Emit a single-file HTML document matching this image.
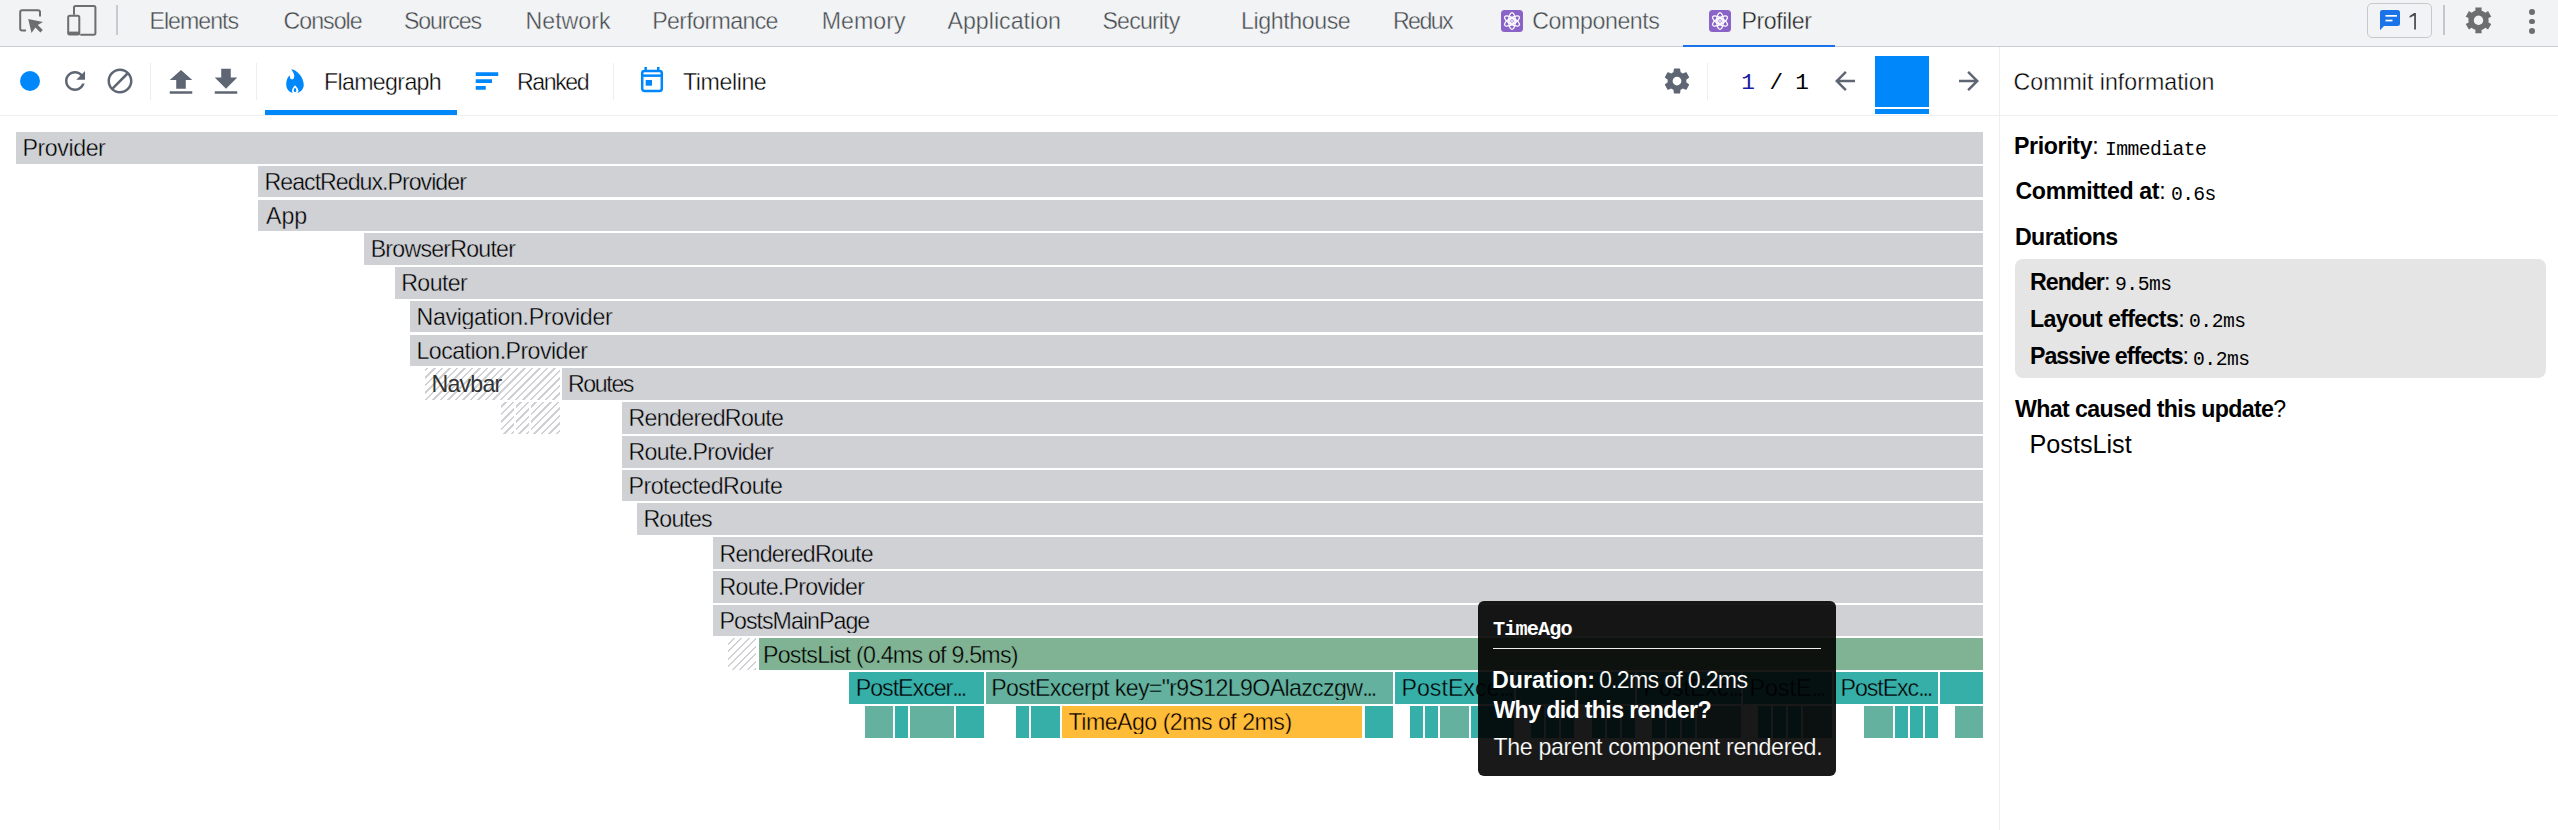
<!DOCTYPE html><html><head><meta charset="utf-8"><style>
html,body{margin:0;padding:0;font-family:"Liberation Sans",sans-serif;width:2558px;height:830px;overflow:hidden;background:#fff;}
.t{position:absolute;white-space:pre;}
.r{position:absolute;}
</style></head><body>
<div class="r" style="left:0.00px;top:0.00px;width:2558.00px;height:46.00px;background:#f1f3f4;"></div>
<div class="r" style="left:0.00px;top:46.00px;width:2558.00px;height:1.00px;background:#cacdd1;"></div>
<svg class="r" style="left:0.00px;top:0.00px;" width="60" height="46" viewBox="0 0 60 46"><path d="M26 30.4H22.2a2 2 0 0 1-2-2V12.3a2 2 0 0 1 2-2H38a2 2 0 0 1 2 2v4.3" fill="none" stroke="#6e6e6e" stroke-width="2"/>
<path d="M28.2 18.9L43 22l-5.2 3.1 5 5-2.4 2.4-5-5L31.5 32.9z" fill="#6e6e6e"/></svg>
<svg class="r" style="left:60.00px;top:0.00px;" width="50" height="46" viewBox="0 0 50 46"><path d="M14 14.8V7.4a1.5 1.5 0 0 1 1.5-1.5h18.4a1.5 1.5 0 0 1 1.5 1.5v25.8a1.5 1.5 0 0 1-1.5 1.5H20.3" fill="none" stroke="#6e6e6e" stroke-width="2"/>
<rect x="8.2" y="15.8" width="11.1" height="18.6" rx="1.5" fill="none" stroke="#6e6e6e" stroke-width="2"/>
<rect x="8.2" y="31.6" width="11.1" height="3.2" fill="#6e6e6e"/></svg>
<div class="r" style="left:116.00px;top:5.00px;width:2.00px;height:30.00px;background:#c8ccd0;"></div>
<div class="t" style="left:149.50px;top:9.66px;font-size:23.2px;line-height:23.2px;font-weight:400;color:#44484d;font-family:'Liberation Sans', sans-serif;letter-spacing:-1.000px;-webkit-text-stroke:0.4px #f1f3f4;">Elements</div>
<div class="t" style="left:283.50px;top:9.66px;font-size:23.2px;line-height:23.2px;font-weight:400;color:#44484d;font-family:'Liberation Sans', sans-serif;letter-spacing:-1.000px;-webkit-text-stroke:0.4px #f1f3f4;">Console</div>
<div class="t" style="left:404.00px;top:9.66px;font-size:23.2px;line-height:23.2px;font-weight:400;color:#44484d;font-family:'Liberation Sans', sans-serif;letter-spacing:-1.167px;-webkit-text-stroke:0.4px #f1f3f4;">Sources</div>
<div class="t" style="left:525.50px;top:9.66px;font-size:23.2px;line-height:23.2px;font-weight:400;color:#44484d;font-family:'Liberation Sans', sans-serif;-webkit-text-stroke:0.4px #f1f3f4;">Network</div>
<div class="t" style="left:652.25px;top:9.66px;font-size:23.2px;line-height:23.2px;font-weight:400;color:#44484d;font-family:'Liberation Sans', sans-serif;letter-spacing:-0.650px;-webkit-text-stroke:0.4px #f1f3f4;">Performance</div>
<div class="t" style="left:821.80px;top:9.66px;font-size:23.2px;line-height:23.2px;font-weight:400;color:#44484d;font-family:'Liberation Sans', sans-serif;-webkit-text-stroke:0.4px #f1f3f4;">Memory</div>
<div class="t" style="left:947.50px;top:9.66px;font-size:23.2px;line-height:23.2px;font-weight:400;color:#44484d;font-family:'Liberation Sans', sans-serif;-webkit-text-stroke:0.4px #f1f3f4;">Application</div>
<div class="t" style="left:1102.50px;top:9.66px;font-size:23.2px;line-height:23.2px;font-weight:400;color:#44484d;font-family:'Liberation Sans', sans-serif;letter-spacing:-0.857px;-webkit-text-stroke:0.4px #f1f3f4;">Security</div>
<div class="t" style="left:1241.00px;top:9.66px;font-size:23.2px;line-height:23.2px;font-weight:400;color:#44484d;font-family:'Liberation Sans', sans-serif;letter-spacing:-0.417px;-webkit-text-stroke:0.4px #f1f3f4;">Lighthouse</div>
<div class="t" style="left:1393.00px;top:9.66px;font-size:23.2px;line-height:23.2px;font-weight:400;color:#44484d;font-family:'Liberation Sans', sans-serif;letter-spacing:-1.625px;-webkit-text-stroke:0.4px #f1f3f4;">Redux</div>
<div class="t" style="left:1532.25px;top:9.66px;font-size:23.2px;line-height:23.2px;font-weight:400;color:#44484d;font-family:'Liberation Sans', sans-serif;letter-spacing:-0.417px;-webkit-text-stroke:0.4px #f1f3f4;">Components</div>
<div class="t" style="left:1741.50px;top:9.66px;font-size:23.2px;line-height:23.2px;font-weight:400;color:#1f1f1f;font-family:'Liberation Sans', sans-serif;letter-spacing:-0.429px;-webkit-text-stroke:0.4px #f1f3f4;">Profiler</div>
<svg class="r" style="left:1501.00px;top:10.00px;" width="22" height="22" viewBox="0 0 22 22"><rect x="0" y="0" width="22" height="22" rx="3.5" fill="#8a63c6"/>
<g fill="none" stroke="#fff" stroke-width="1.25">
<ellipse cx="11" cy="11" rx="8.4" ry="3.3" transform="rotate(30 11 11)"/>
<ellipse cx="11" cy="11" rx="8.4" ry="3.3" transform="rotate(90 11 11)"/>
<ellipse cx="11" cy="11" rx="8.4" ry="3.3" transform="rotate(150 11 11)"/>
<circle cx="11" cy="11" r="2.3"/></g><circle cx="11" cy="11" r="1.0" fill="#fff"/></svg>
<svg class="r" style="left:1709.00px;top:10.00px;" width="22" height="22" viewBox="0 0 22 22"><rect x="0" y="0" width="22" height="22" rx="3.5" fill="#8a63c6"/>
<g fill="none" stroke="#fff" stroke-width="1.25">
<ellipse cx="11" cy="11" rx="8.4" ry="3.3" transform="rotate(30 11 11)"/>
<ellipse cx="11" cy="11" rx="8.4" ry="3.3" transform="rotate(90 11 11)"/>
<ellipse cx="11" cy="11" rx="8.4" ry="3.3" transform="rotate(150 11 11)"/>
<circle cx="11" cy="11" r="2.3"/></g><circle cx="11" cy="11" r="1.0" fill="#fff"/></svg>
<div class="r" style="left:1683.00px;top:45.00px;width:152.00px;height:2.00px;background:#1a73e8;"></div>
<div class="r" style="left:2367px;top:3px;width:63px;height:33px;border:1px solid #c7c9cc;border-radius:5px;box-sizing:border-box;width:65px;height:35px;"></div>
<svg class="r" style="left:2378.00px;top:8.00px;" width="24" height="24" viewBox="0 0 24 24"><path d="M4.3 2h15.2a2.5 2.5 0 0 1 2.5 2.5v11a2.5 2.5 0 0 1-2.5 2.5H6L2 22.2V4.3A2.3 2.3 0 0 1 4.3 2z" fill="#1a73e8"/>
<rect x="7.5" y="7" width="11.5" height="1.7" fill="#fff"/><rect x="7.5" y="11.7" width="7" height="1.7" fill="#fff"/></svg>
<svg class="r" style="left:2400.00px;top:8.00px;" width="24" height="26" viewBox="0 0 24 26"><path d="M14.2,5.1 H15.9 V21.4 H14.2 V7.6 L9.6,9.7 V8.0 Z" fill="#44484d"/></svg>
<div class="r" style="left:2443.00px;top:5.00px;width:2.00px;height:30.00px;background:#c4c7cb;"></div>
<svg class="r" style="left:2465.00px;top:7.00px;" width="27" height="27" viewBox="0 0 27 27"><path d="M9.68,3.84 L10.52,3.55 L10.28,0.40 L16.72,0.40 L16.48,3.55 L19.78,5.26 L20.46,5.84 L23.07,4.06 L26.28,9.63 L23.44,11.01 L23.60,14.72 L23.44,15.59 L26.28,16.97 L23.07,22.54 L20.46,20.76 L17.32,22.76 L16.48,23.05 L16.72,26.20 L10.28,26.20 L10.52,23.05 L7.22,21.34 L6.54,20.76 L3.93,22.54 L0.72,16.97 L3.56,15.59 L3.40,11.88 L3.56,11.01 L0.72,9.63 L3.93,4.06 L6.54,5.84Z M13.5,8.6 a4.7,4.7 0 1,0 0.01,0 Z" fill="#6e6e6e" fill-rule="evenodd"/></svg>
<div class="r" style="left:2528.90px;top:9.00px;width:5.8px;height:5.8px;border-radius:50%;background:#6e6e6e"></div>
<div class="r" style="left:2528.90px;top:18.50px;width:5.8px;height:5.8px;border-radius:50%;background:#6e6e6e"></div>
<div class="r" style="left:2528.90px;top:27.90px;width:5.8px;height:5.8px;border-radius:50%;background:#6e6e6e"></div>
<div class="r" style="left:0.00px;top:115.00px;width:2558.00px;height:1.00px;background:#eeeeee;"></div>
<div class="r" style="left:1999.00px;top:47.00px;width:1.00px;height:783.00px;background:#eeeeee;"></div>
<div class="r" style="left:19.9px;top:70.9px;width:20px;height:20px;border-radius:50%;background:#0088fa"></div>
<svg class="r" style="left:60.00px;top:66.00px;" width="30" height="30" viewBox="0 0 24 24"><path fill="#5f6673" d="M17.65 6.35C16.2 4.9 14.21 4 12 4c-4.42 0-7.99 3.58-7.99 8s3.57 8 7.99 8c3.73 0 6.84-2.55 7.73-6h-2.08c-.82 2.33-3.04 4-5.65 4-3.31 0-6-2.69-6-6s2.69-6 6-6c1.66 0 3.14.69 4.22 1.78L13 11h7V4l-2.35 2.35z"/></svg>
<svg class="r" style="left:105.00px;top:66.00px;" width="30" height="30" viewBox="0 0 24 24"><path fill="#5f6673" d="M12 2C6.48 2 2 6.48 2 12s4.48 10 10 10 10-4.48 10-10S17.52 2 12 2zM4 12c0-4.42 3.58-8 8-8 1.85 0 3.55.63 4.9 1.69L5.69 16.9C4.63 15.55 4 13.85 4 12zm8 8c-1.85 0-3.55-.63-4.9-1.69L18.31 7.1C19.37 8.45 20 10.15 20 12c0 4.42-3.58 8-8 8z"/></svg>
<div class="r" style="left:150.00px;top:63.00px;width:1.00px;height:37.00px;background:#eeeeee;"></div>
<svg class="r" style="left:166.15px;top:65.80px;" width="30" height="30" viewBox="0 0 24 24"><path fill="#5f6673" d="M8.18,18.13v-7H3l9-8,9,8H15.82v7ZM3,20.13H21v2H3Z"/></svg>
<svg class="r" style="left:211.15px;top:65.90px;" width="30" height="30" viewBox="0 0 24 24"><path fill="#5f6673" d="M15.82,2.14v7H21l-9,9L3,9.14H8.18v-7ZM21,20.13H3v2H21Z"/></svg>
<div class="r" style="left:256.00px;top:63.00px;width:1.00px;height:37.00px;background:#eeeeee;"></div>
<svg class="r" style="left:279.65px;top:65.90px;" width="30" height="30" viewBox="0 0 24 24"><path fill="#0088fa" fill-rule="evenodd" d="M10.07,21.5C7.14,20.69 5,18.06 5,14.94C5,14.02 5,9.82 7.83,7.38C7.83,7.38 7.58,11.2 10,10.63C11.13,10.33 13.01,7.63 8.92,2.5C14.17,3.07 19,9.33 19,14.94C19,18.06 16.86,20.69 13.93,21.5C14.45,21.01 14.78,20.32 14.78,19.56C14.78,18.11 12,15.3 12,15.3C12,15.3 9.58,18.11 9.58,19.56C9.58,20.32 9.9,21.01 10.07,21.5Z M12,17.2C12,17.2 10.9,18.6 10.9,19.5C10.9,20.2 11.4,20.7 12,20.7C12.6,20.7 13.1,20.2 13.1,19.5C13.1,18.6 12,17.2 12,17.2Z"/></svg>
<div class="t" style="left:324.00px;top:70.66px;font-size:23.2px;line-height:23.2px;font-weight:400;color:#000;font-family:'Liberation Sans', sans-serif;letter-spacing:-0.666px;-webkit-text-stroke:0.4px #fff;">Flamegraph</div>
<div class="r" style="left:265.00px;top:110.00px;width:191.50px;height:5.00px;background:#0088fa;"></div>
<svg class="r" style="left:472.05px;top:65.85px;" width="30" height="30" viewBox="0 0 24 24"><path fill="#0088fa" d="M3 5h18v3H3zM3 10.5h13v3H3zM3 16h8v3H3z"/></svg>
<div class="t" style="left:517.00px;top:70.66px;font-size:23.2px;line-height:23.2px;font-weight:400;color:#000;font-family:'Liberation Sans', sans-serif;letter-spacing:-1.440px;-webkit-text-stroke:0.4px #fff;">Ranked</div>
<div class="r" style="left:613.00px;top:63.00px;width:1.00px;height:37.00px;background:#eeeeee;"></div>
<svg class="r" style="left:638.00px;top:64.00px;" width="28" height="30" viewBox="0 0 28 30"><rect x="4.2" y="6.9" width="19.6" height="20" rx="2.2" fill="none" stroke="#0088fa" stroke-width="2.5"/>
<rect x="4" y="10.4" width="20" height="2.5" fill="#0088fa"/>
<rect x="6.4" y="3" width="2.5" height="4" fill="#0088fa"/><rect x="19" y="3" width="2.5" height="4" fill="#0088fa"/>
<rect x="7.7" y="16" width="6.3" height="5.7" fill="#0088fa"/></svg>
<div class="t" style="left:683.00px;top:70.66px;font-size:23.2px;line-height:23.2px;font-weight:400;color:#000;font-family:'Liberation Sans', sans-serif;letter-spacing:-0.429px;-webkit-text-stroke:0.4px #fff;">Timeline</div>
<svg class="r" style="left:1661.70px;top:65.70px;" width="30" height="30" viewBox="0 0 24 24"><path fill="#5f6673" d="M19.43 12.98c.04-.32.07-.64.07-.98s-.03-.66-.07-.98l2.11-1.65c.19-.15.24-.42.12-.64l-2-3.46c-.12-.22-.39-.3-.61-.22l-2.49 1c-.52-.4-1.08-.73-1.69-.98l-.38-2.65C14.46 2.18 14.25 2 14 2h-4c-.25 0-.46.18-.49.42l-.38 2.65c-.61.25-1.17.59-1.69.98l-2.49-1c-.23-.09-.49 0-.61.22l-2 3.46c-.13.22-.07.49.12.64l2.11 1.65c-.04.32-.07.65-.07.98s.03.66.07.98l-2.11 1.65c-.19.15-.24.42-.12.64l2 3.46c.12.22.39.3.61.22l2.49-1c.52.4 1.08.73 1.69.98l.38 2.65c.03.24.24.42.49.42h4c.25 0 .46-.18.49-.42l.38-2.65c.61-.25 1.17-.59 1.69-.98l2.49 1c.23.09.49 0 .61-.22l2-3.46c.12-.22.07-.49-.12-.64l-2.11-1.65zM12 15.5c-1.93 0-3.5-1.57-3.5-3.5s1.57-3.5 3.5-3.5 3.5 1.57 3.5 3.5-1.57 3.5-3.5 3.5z"/></svg>
<div class="r" style="left:1707.00px;top:63.00px;width:1.00px;height:37.00px;background:#eeeeee;"></div>
<div class="t" style="left:1741.30px;top:71.70px;font-size:22.7px;line-height:22.7px;font-weight:400;color:#1a1aa6;font-family:'Liberation Mono', monospace;">1</div>
<div class="t" style="left:1769.50px;top:71.70px;font-size:22.7px;line-height:22.7px;font-weight:400;color:#000;font-family:'Liberation Mono', monospace;">/</div>
<div class="t" style="left:1795.20px;top:71.70px;font-size:22.7px;line-height:22.7px;font-weight:400;color:#000;font-family:'Liberation Mono', monospace;">1</div>
<svg class="r" style="left:1830.20px;top:66.00px;" width="30" height="30" viewBox="0 0 24 24"><path fill="#5f6673" d="M20 11H7.83l5.59-5.59L12 4l-8 8 8 8 1.41-1.41L7.83 13H20v-2z"/></svg>
<div class="r" style="left:1875.00px;top:56.00px;width:54.00px;height:51.00px;background:#0088fa;"></div>
<div class="r" style="left:1875.00px;top:109.00px;width:54.00px;height:5.00px;background:#0088fa;"></div>
<svg class="r" style="left:1954.00px;top:66.00px;" width="30" height="30" viewBox="0 0 24 24"><path fill="#5f6673" d="M12 4l-1.41 1.41L16.17 11H4v2h12.17l-5.58 5.59L12 20l8-8z"/></svg>
<div class="r" style="left:16.00px;top:132.00px;width:1967.00px;height:31.70px;background:#cfd1d5;"></div>
<div class="t" style="left:22.50px;top:136.96px;font-size:23.2px;line-height:23.2px;font-weight:400;color:#000;font-family:'Liberation Sans', sans-serif;letter-spacing:-0.429px;width:1962.00px;overflow:hidden;-webkit-text-stroke:0.4px #cfd1d5;">Provider</div>
<div class="r" style="left:258.00px;top:165.76px;width:1725.00px;height:31.70px;background:#cfd1d5;"></div>
<div class="t" style="left:264.50px;top:170.72px;font-size:23.2px;line-height:23.2px;font-weight:400;color:#000;font-family:'Liberation Sans', sans-serif;letter-spacing:-1.000px;width:1720.00px;overflow:hidden;-webkit-text-stroke:0.4px #cfd1d5;">ReactRedux.Provider</div>
<div class="r" style="left:258.00px;top:199.52px;width:1725.00px;height:31.70px;background:#cfd1d5;"></div>
<div class="t" style="left:266.00px;top:205.48px;font-size:23.2px;line-height:23.2px;font-weight:400;color:#000;font-family:'Liberation Sans', sans-serif;width:1720.00px;overflow:hidden;-webkit-text-stroke:0.4px #cfd1d5;">App</div>
<div class="r" style="left:364.20px;top:233.28px;width:1618.80px;height:31.70px;background:#cfd1d5;"></div>
<div class="t" style="left:370.70px;top:238.24px;font-size:23.2px;line-height:23.2px;font-weight:400;color:#000;font-family:'Liberation Sans', sans-serif;letter-spacing:-0.784px;width:1613.80px;overflow:hidden;-webkit-text-stroke:0.4px #cfd1d5;">BrowserRouter</div>
<div class="r" style="left:394.70px;top:267.04px;width:1588.30px;height:31.70px;background:#cfd1d5;"></div>
<div class="t" style="left:401.20px;top:272.00px;font-size:23.2px;line-height:23.2px;font-weight:400;color:#000;font-family:'Liberation Sans', sans-serif;letter-spacing:-0.600px;width:1583.30px;overflow:hidden;-webkit-text-stroke:0.4px #cfd1d5;">Router</div>
<div class="r" style="left:410.00px;top:300.80px;width:1573.00px;height:31.70px;background:#cfd1d5;"></div>
<div class="t" style="left:416.50px;top:305.76px;font-size:23.2px;line-height:23.2px;font-weight:400;color:#000;font-family:'Liberation Sans', sans-serif;letter-spacing:-0.344px;width:1568.00px;overflow:hidden;-webkit-text-stroke:0.4px #cfd1d5;">Navigation.Provider</div>
<div class="r" style="left:410.00px;top:334.56px;width:1573.00px;height:31.70px;background:#cfd1d5;"></div>
<div class="t" style="left:416.50px;top:339.52px;font-size:23.2px;line-height:23.2px;font-weight:400;color:#000;font-family:'Liberation Sans', sans-serif;letter-spacing:-0.562px;width:1568.00px;overflow:hidden;-webkit-text-stroke:0.4px #cfd1d5;">Location.Provider</div>
<div class="r" style="left:425.00px;top:368.32px;width:134.50px;height:31.70px;background:transparent;background-image:repeating-linear-gradient(135deg,#cfd1d5 0px,#cfd1d5 1.7px,rgba(255,255,255,0) 1.7px,rgba(255,255,255,0) 5.3px);background-color:#fff;background-attachment:fixed;"></div>
<div class="t" style="left:431.50px;top:373.28px;font-size:23.2px;line-height:23.2px;font-weight:400;color:#333;font-family:'Liberation Sans', sans-serif;letter-spacing:-0.800px;width:129.50px;overflow:hidden;">Navbar</div>
<div class="r" style="left:561.50px;top:368.32px;width:1421.50px;height:31.70px;background:#cfd1d5;"></div>
<div class="t" style="left:568.00px;top:373.28px;font-size:23.2px;line-height:23.2px;font-weight:400;color:#000;font-family:'Liberation Sans', sans-serif;letter-spacing:-1.400px;width:1416.50px;overflow:hidden;-webkit-text-stroke:0.4px #cfd1d5;">Routes</div>
<div class="r" style="left:501.00px;top:402.08px;width:13.00px;height:31.70px;background:transparent;background-image:repeating-linear-gradient(135deg,#cfd1d5 0px,#cfd1d5 1.7px,rgba(255,255,255,0) 1.7px,rgba(255,255,255,0) 5.3px);background-color:#fff;background-attachment:fixed;"></div>
<div class="r" style="left:516.00px;top:402.08px;width:13.00px;height:31.70px;background:transparent;background-image:repeating-linear-gradient(135deg,#cfd1d5 0px,#cfd1d5 1.7px,rgba(255,255,255,0) 1.7px,rgba(255,255,255,0) 5.3px);background-color:#fff;background-attachment:fixed;"></div>
<div class="r" style="left:531.00px;top:402.08px;width:28.50px;height:31.70px;background:transparent;background-image:repeating-linear-gradient(135deg,#cfd1d5 0px,#cfd1d5 1.7px,rgba(255,255,255,0) 1.7px,rgba(255,255,255,0) 5.3px);background-color:#fff;background-attachment:fixed;"></div>
<div class="r" style="left:622.00px;top:402.08px;width:1361.00px;height:31.70px;background:#cfd1d5;"></div>
<div class="t" style="left:628.50px;top:407.04px;font-size:23.2px;line-height:23.2px;font-weight:400;color:#000;font-family:'Liberation Sans', sans-serif;letter-spacing:-0.684px;width:1356.00px;overflow:hidden;-webkit-text-stroke:0.4px #cfd1d5;">RenderedRoute</div>
<div class="r" style="left:622.00px;top:435.84px;width:1361.00px;height:31.70px;background:#cfd1d5;"></div>
<div class="t" style="left:628.50px;top:440.80px;font-size:23.2px;line-height:23.2px;font-weight:400;color:#000;font-family:'Liberation Sans', sans-serif;letter-spacing:-0.709px;width:1356.00px;overflow:hidden;-webkit-text-stroke:0.4px #cfd1d5;">Route.Provider</div>
<div class="r" style="left:622.00px;top:469.60px;width:1361.00px;height:31.70px;background:#cfd1d5;"></div>
<div class="t" style="left:628.50px;top:474.56px;font-size:23.2px;line-height:23.2px;font-weight:400;color:#000;font-family:'Liberation Sans', sans-serif;letter-spacing:-0.523px;width:1356.00px;overflow:hidden;-webkit-text-stroke:0.4px #cfd1d5;">ProtectedRoute</div>
<div class="r" style="left:637.00px;top:503.36px;width:1346.00px;height:31.70px;background:#cfd1d5;"></div>
<div class="t" style="left:643.50px;top:508.32px;font-size:23.2px;line-height:23.2px;font-weight:400;color:#000;font-family:'Liberation Sans', sans-serif;letter-spacing:-0.880px;width:1341.00px;overflow:hidden;-webkit-text-stroke:0.4px #cfd1d5;">Routes</div>
<div class="r" style="left:713.00px;top:537.12px;width:1270.00px;height:31.70px;background:#cfd1d5;"></div>
<div class="t" style="left:719.50px;top:543.08px;font-size:23.2px;line-height:23.2px;font-weight:400;color:#000;font-family:'Liberation Sans', sans-serif;letter-spacing:-0.801px;width:1265.00px;overflow:hidden;-webkit-text-stroke:0.4px #cfd1d5;">RenderedRoute</div>
<div class="r" style="left:713.00px;top:570.88px;width:1270.00px;height:31.70px;background:#cfd1d5;"></div>
<div class="t" style="left:719.50px;top:575.84px;font-size:23.2px;line-height:23.2px;font-weight:400;color:#000;font-family:'Liberation Sans', sans-serif;letter-spacing:-0.709px;width:1265.00px;overflow:hidden;-webkit-text-stroke:0.4px #cfd1d5;">Route.Provider</div>
<div class="r" style="left:713.00px;top:604.64px;width:1270.00px;height:31.70px;background:#cfd1d5;"></div>
<div class="t" style="left:719.50px;top:609.60px;font-size:23.2px;line-height:23.2px;font-weight:400;color:#000;font-family:'Liberation Sans', sans-serif;letter-spacing:-0.975px;width:1265.00px;overflow:hidden;-webkit-text-stroke:0.4px #cfd1d5;">PostsMainPage</div>
<div class="r" style="left:728.20px;top:638.40px;width:28.30px;height:31.70px;background:transparent;background-image:repeating-linear-gradient(135deg,#cfd1d5 0px,#cfd1d5 1.7px,rgba(255,255,255,0) 1.7px,rgba(255,255,255,0) 5.3px);background-color:#fff;background-attachment:fixed;"></div>
<div class="r" style="left:758.50px;top:638.40px;width:1224.50px;height:31.70px;background:#80b393;"></div>
<div class="t" style="left:763.00px;top:644.36px;font-size:23.2px;line-height:23.2px;font-weight:400;color:#000;font-family:'Liberation Sans', sans-serif;letter-spacing:-0.760px;width:1219.50px;overflow:hidden;-webkit-text-stroke:0.4px #80b393;">PostsList (0.4ms of 9.5ms)</div>
<div class="r" style="left:849.30px;top:672.16px;width:134.50px;height:31.70px;background:#37afa9;"></div>
<div class="t" style="left:855.80px;top:677.12px;font-size:23.2px;line-height:23.2px;font-weight:400;color:#000;font-family:'Liberation Sans', sans-serif;letter-spacing:-1.020px;width:129.50px;overflow:hidden;-webkit-text-stroke:0.4px #37afa9;">PostExcer<span style="letter-spacing:-2.2px">...</span></div>
<div class="r" style="left:986.00px;top:672.16px;width:406.50px;height:31.70px;background:#63b19e;"></div>
<div class="t" style="left:991.30px;top:677.12px;font-size:23.2px;line-height:23.2px;font-weight:400;color:#000;font-family:'Liberation Sans', sans-serif;letter-spacing:-0.667px;width:401.50px;overflow:hidden;-webkit-text-stroke:0.4px #63b19e;">PostExcerpt key="r9S12L9OAlazczgw<span style="letter-spacing:-2.2px">...</span></div>
<div class="r" style="left:1395.00px;top:672.16px;width:119.00px;height:31.70px;background:#37afa9;"></div>
<div class="t" style="left:1401.50px;top:677.12px;font-size:23.2px;line-height:23.2px;font-weight:400;color:#000;font-family:'Liberation Sans', sans-serif;width:114.00px;overflow:hidden;-webkit-text-stroke:0.4px #37afa9;">PostExce<span style="letter-spacing:-2.2px">...</span></div>
<div class="r" style="left:1516.00px;top:672.16px;width:59.00px;height:31.70px;background:#37afa9;"></div>
<div class="r" style="left:1577.00px;top:672.16px;width:58.00px;height:31.70px;background:#37afa9;"></div>
<div class="r" style="left:1637.00px;top:672.16px;width:104.00px;height:31.70px;background:#37afa9;"></div>
<div class="t" style="left:1643.50px;top:677.12px;font-size:23.2px;line-height:23.2px;font-weight:400;color:#000;font-family:'Liberation Sans', sans-serif;width:99.00px;overflow:hidden;-webkit-text-stroke:0.4px #37afa9;">PostExc<span style="letter-spacing:-2.2px">...</span></div>
<div class="r" style="left:1743.00px;top:672.16px;width:89.00px;height:31.70px;background:#37afa9;"></div>
<div class="t" style="left:1749.50px;top:677.12px;font-size:23.2px;line-height:23.2px;font-weight:400;color:#000;font-family:'Liberation Sans', sans-serif;width:84.00px;overflow:hidden;-webkit-text-stroke:0.4px #37afa9;">PostE<span style="letter-spacing:-2.2px">...</span></div>
<div class="r" style="left:1834.00px;top:672.16px;width:104.00px;height:31.70px;background:#37afa9;"></div>
<div class="t" style="left:1840.50px;top:677.12px;font-size:23.2px;line-height:23.2px;font-weight:400;color:#000;font-family:'Liberation Sans', sans-serif;letter-spacing:-1.056px;width:99.00px;overflow:hidden;-webkit-text-stroke:0.4px #37afa9;">PostExc<span style="letter-spacing:-2.2px">...</span></div>
<div class="r" style="left:1940.00px;top:672.16px;width:43.00px;height:31.70px;background:#37afa9;"></div>
<div class="r" style="left:865.00px;top:705.92px;width:27.70px;height:31.70px;background:#63b19e;"></div>
<div class="r" style="left:895.00px;top:705.92px;width:13.00px;height:31.70px;background:#37afa9;"></div>
<div class="r" style="left:910.00px;top:705.92px;width:43.70px;height:31.70px;background:#63b19e;"></div>
<div class="r" style="left:956.00px;top:705.92px;width:27.80px;height:31.70px;background:#37afa9;"></div>
<div class="r" style="left:1016.00px;top:705.92px;width:13.00px;height:31.70px;background:#37afa9;"></div>
<div class="r" style="left:1031.00px;top:705.92px;width:28.50px;height:31.70px;background:#37afa9;"></div>
<div class="r" style="left:1365.00px;top:705.92px;width:27.50px;height:31.70px;background:#37afa9;"></div>
<div class="r" style="left:1410.00px;top:705.92px;width:13.00px;height:31.70px;background:#37afa9;"></div>
<div class="r" style="left:1425.00px;top:705.92px;width:13.00px;height:31.70px;background:#37afa9;"></div>
<div class="r" style="left:1440.00px;top:705.92px;width:28.50px;height:31.70px;background:#63b19e;"></div>
<div class="r" style="left:1471.00px;top:705.92px;width:43.00px;height:31.70px;background:#37afa9;"></div>
<div class="r" style="left:1531.00px;top:705.92px;width:13.00px;height:31.70px;background:#37afa9;"></div>
<div class="r" style="left:1546.00px;top:705.92px;width:13.00px;height:31.70px;background:#37afa9;"></div>
<div class="r" style="left:1561.00px;top:705.92px;width:13.00px;height:31.70px;background:#37afa9;"></div>
<div class="r" style="left:1592.00px;top:705.92px;width:13.00px;height:31.70px;background:#37afa9;"></div>
<div class="r" style="left:1607.00px;top:705.92px;width:13.00px;height:31.70px;background:#37afa9;"></div>
<div class="r" style="left:1622.00px;top:705.92px;width:13.00px;height:31.70px;background:#37afa9;"></div>
<div class="r" style="left:1652.00px;top:705.92px;width:13.00px;height:31.70px;background:#37afa9;"></div>
<div class="r" style="left:1667.00px;top:705.92px;width:13.00px;height:31.70px;background:#37afa9;"></div>
<div class="r" style="left:1682.00px;top:705.92px;width:13.00px;height:31.70px;background:#37afa9;"></div>
<div class="r" style="left:1697.00px;top:705.92px;width:44.00px;height:31.70px;background:#63b19e;"></div>
<div class="r" style="left:1758.00px;top:705.92px;width:13.00px;height:31.70px;background:#37afa9;"></div>
<div class="r" style="left:1773.00px;top:705.92px;width:13.00px;height:31.70px;background:#37afa9;"></div>
<div class="r" style="left:1788.00px;top:705.92px;width:13.00px;height:31.70px;background:#37afa9;"></div>
<div class="r" style="left:1803.00px;top:705.92px;width:29.00px;height:31.70px;background:#63b19e;"></div>
<div class="r" style="left:1864.00px;top:705.92px;width:28.50px;height:31.70px;background:#63b19e;"></div>
<div class="r" style="left:1895.00px;top:705.92px;width:12.50px;height:31.70px;background:#37afa9;"></div>
<div class="r" style="left:1910.00px;top:705.92px;width:12.50px;height:31.70px;background:#37afa9;"></div>
<div class="r" style="left:1925.00px;top:705.92px;width:13.00px;height:31.70px;background:#37afa9;"></div>
<div class="r" style="left:1955.00px;top:705.92px;width:28.00px;height:31.70px;background:#63b19e;"></div>
<div class="r" style="left:1062.00px;top:705.92px;width:300.00px;height:31.70px;background:#febc38;"></div>
<div class="t" style="left:1068.50px;top:710.88px;font-size:23.2px;line-height:23.2px;font-weight:400;color:#000;font-family:'Liberation Sans', sans-serif;letter-spacing:-0.527px;width:295.00px;overflow:hidden;-webkit-text-stroke:0.4px #febc38;">TimeAgo (2ms of 2ms)</div>
<div class="r" style="left:1478px;top:601px;width:357.5px;height:174.5px;background:rgba(0,0,0,0.9);border-radius:6px;"></div>
<div class="t" style="left:1493.10px;top:619.62px;font-size:20.2px;line-height:20.2px;font-weight:700;color:#fff;font-family:'Liberation Mono', monospace;letter-spacing:-0.883px;">TimeAgo</div>
<div class="r" style="left:1493.00px;top:648.00px;width:328.00px;height:1.30px;background:#eeeeee;"></div>
<div class="t" style="left:1492.00px;top:669.36px;font-size:23.2px;line-height:23.2px;font-weight:700;color:#fff;font-family:'Liberation Sans', sans-serif;">Duration:</div>
<div class="t" style="left:1598.90px;top:669.36px;font-size:23.2px;line-height:23.2px;font-weight:400;color:#fff;font-family:'Liberation Sans', sans-serif;letter-spacing:-0.723px;-webkit-text-stroke:0.2px #111;">0.2ms of 0.2ms</div>
<div class="t" style="left:1493.40px;top:699.16px;font-size:23.2px;line-height:23.2px;font-weight:700;color:#fff;font-family:'Liberation Sans', sans-serif;letter-spacing:-0.653px;">Why did this render?</div>
<div class="t" style="left:1493.40px;top:736.46px;font-size:23.2px;line-height:23.2px;font-weight:400;color:#fff;font-family:'Liberation Sans', sans-serif;letter-spacing:-0.338px;-webkit-text-stroke:0.2px #1a1a1a;">The parent component rendered.</div>
<div class="t" style="left:2013.50px;top:70.76px;font-size:23.2px;line-height:23.2px;font-weight:400;color:#000;font-family:'Liberation Sans', sans-serif;-webkit-text-stroke:0.4px #fff;">Commit information</div>
<div class="t" style="left:2014.00px;top:135.26px;font-size:23.2px;line-height:23.2px;font-weight:400;color:#000;font-family:'Liberation Sans', sans-serif;letter-spacing:-0.375px;"><b>Priority</b>:</div>
<div class="t" style="left:2105.00px;top:140.90px;font-size:19.7px;line-height:19.7px;font-weight:400;color:#000;font-family:'Liberation Mono', monospace;letter-spacing:-0.562px;">Immediate</div>
<div class="t" style="left:2015.50px;top:179.86px;font-size:23.2px;line-height:23.2px;font-weight:400;color:#000;font-family:'Liberation Sans', sans-serif;letter-spacing:-0.375px;"><b>Committed at</b>:</div>
<div class="t" style="left:2171.00px;top:186.40px;font-size:19.7px;line-height:19.7px;font-weight:400;color:#000;font-family:'Liberation Mono', monospace;letter-spacing:-0.667px;">0.6s</div>
<div class="t" style="left:2015.00px;top:226.36px;font-size:23.2px;line-height:23.2px;font-weight:400;color:#000;font-family:'Liberation Sans', sans-serif;letter-spacing:-0.625px;"><b>Durations</b></div>
<div class="r" style="left:2015.4px;top:258.5px;width:530.2px;height:119px;background:#e5e5e5;border-radius:8px;"></div>
<div class="t" style="left:2030.00px;top:271.36px;font-size:23.2px;line-height:23.2px;font-weight:400;color:#000;font-family:'Liberation Sans', sans-serif;letter-spacing:-1.000px;"><b>Render</b>:</div>
<div class="t" style="left:2115.00px;top:275.90px;font-size:19.7px;line-height:19.7px;font-weight:400;color:#000;font-family:'Liberation Mono', monospace;letter-spacing:-0.500px;">9.5ms</div>
<div class="t" style="left:2030.00px;top:308.36px;font-size:23.2px;line-height:23.2px;font-weight:400;color:#000;font-family:'Liberation Sans', sans-serif;letter-spacing:-0.643px;"><b>Layout effects</b>:</div>
<div class="t" style="left:2189.00px;top:312.90px;font-size:19.7px;line-height:19.7px;font-weight:400;color:#000;font-family:'Liberation Mono', monospace;letter-spacing:-0.500px;">0.2ms</div>
<div class="t" style="left:2030.00px;top:344.86px;font-size:23.2px;line-height:23.2px;font-weight:400;color:#000;font-family:'Liberation Sans', sans-serif;letter-spacing:-1.000px;"><b>Passive effects</b>:</div>
<div class="t" style="left:2193.00px;top:351.40px;font-size:19.7px;line-height:19.7px;font-weight:400;color:#000;font-family:'Liberation Mono', monospace;letter-spacing:-0.500px;">0.2ms</div>
<div class="t" style="left:2015.00px;top:398.36px;font-size:23.2px;line-height:23.2px;font-weight:400;color:#000;font-family:'Liberation Sans', sans-serif;letter-spacing:-0.643px;"><b>What caused this update</b>?</div>
<div class="t" style="left:2029.50px;top:432.27px;font-size:25.2px;line-height:25.2px;font-weight:400;color:#000;font-family:'Liberation Sans', sans-serif;">PostsList</div>
</body></html>
